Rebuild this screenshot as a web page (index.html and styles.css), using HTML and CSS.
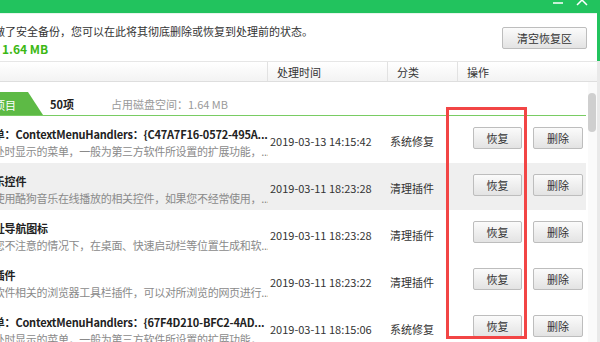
FILE: index.html
```html
<!DOCTYPE html>
<html lang="zh-CN">
<head>
    <meta charset="UTF-8">
    <title>恢复区</title>
    <link rel="stylesheet" href="styles.css">
</head>
<body>
    <div class="window">
        <div class="main">
            <div class="titlebar">
                <svg class="win-ctrl" width="40" height="13" viewBox="0 0 40 13">
                    <line x1="3" y1="3" x2="13" y2="3" stroke="#fff" stroke-width="1.5"/>
                    <line x1="27" y1="-5" x2="37" y2="5" stroke="#fff" stroke-width="1.5"/>
                    <line x1="37" y1="-5" x2="27" y2="5" stroke="#fff" stroke-width="1.5"/>
                </svg>
            </div>

            <div class="info">
                <div class="info-text">
                    <p class="notice clip">已做了安全备份，您可以在此将其彻底删除或恢复到处理前的状态。</p>
                    <p class="size">1.64 MB</p>
                </div>
                <button class="btn btn-clear">清空恢复区</button>
            </div>

            <div class="thead">
                <div class="th th-name"></div>
                <div class="th th-time">处理时间</div>
                <div class="th th-cat">分类</div>
                <div class="th th-op">操作</div>
            </div>

            <div class="content">
                <div class="list">
                    <div class="tabs">
                        <div class="tab-active"><span class="tab-label">全部项目</span></div>
                        <span class="count">50项</span>
                        <span class="disk">占用磁盘空间：1.64 MB</span>
                    </div>

                    <div class="row">
                        <div class="name">
                            <p class="title clip">菜单：ContextMenuHandlers：{C47A7F16-0572-495A...</p>
                            <p class="desc clip">某处时显示的菜单，一般为第三方软件所设置的扩展功能，...</p>
                        </div>
                        <div class="time">2019-03-13 14:15:42</div>
                        <div class="cat">系统修复</div>
                        <div class="ops">
                            <button class="btn btn-restore">恢复</button>
                            <button class="btn btn-delete">删除</button>
                        </div>
                    </div>

                    <div class="row row-hover">
                        <div class="name">
                            <p class="title clip">音乐控件</p>
                            <p class="desc clip">供使用酷狗音乐在线播放的相关控件，如果您不经常使用，...</p>
                        </div>
                        <div class="time">2019-03-11 18:23:28</div>
                        <div class="cat">清理插件</div>
                        <div class="ops">
                            <button class="btn btn-restore">恢复</button>
                            <button class="btn btn-delete">删除</button>
                        </div>
                    </div>

                    <div class="row">
                        <div class="name">
                            <p class="title clip">网址导航图标</p>
                            <p class="desc clip">在您不注意的情况下，在桌面、快速启动栏等位置生成和软...</p>
                        </div>
                        <div class="time">2019-03-11 18:23:28</div>
                        <div class="cat">清理插件</div>
                        <div class="ops">
                            <button class="btn btn-restore">恢复</button>
                            <button class="btn btn-delete">删除</button>
                        </div>
                    </div>

                    <div class="row">
                        <div class="name">
                            <p class="title clip">栏插件</p>
                            <p class="desc clip">与软件相关的浏览器工具栏插件，可以对所浏览的网页进行...</p>
                        </div>
                        <div class="time">2019-03-11 18:23:22</div>
                        <div class="cat">清理插件</div>
                        <div class="ops">
                            <button class="btn btn-restore">恢复</button>
                            <button class="btn btn-delete">删除</button>
                        </div>
                    </div>

                    <div class="row">
                        <div class="name">
                            <p class="title clip">菜单：ContextMenuHandlers：{67F4D210-BFC2-4AD...</p>
                            <p class="desc clip">某处时显示的菜单，一般为第三方软件所设置的扩展功能，...</p>
                        </div>
                        <div class="time">2019-03-11 18:15:06</div>
                        <div class="cat">系统修复</div>
                        <div class="ops">
                            <button class="btn btn-restore">恢复</button>
                            <button class="btn btn-delete">删除</button>
                        </div>
                    </div>
                </div>

                <div class="scrollbar">
                    <div class="thumb"></div>
                </div>
            </div>
        </div>
        <div class="edge"></div>

        <!-- annotation box drawn over the restore column -->
        <div class="mark"></div>
    </div>
</body>
</html>
```

FILE: styles.css
```css
body {
    margin: 0;
    padding: 0;
    overflow: hidden;
    background-color: #ffffff;
    color: #333333;
    font-family: "Noto Sans CJK SC", "Microsoft YaHei", sans-serif;
    font-size: 11px;
}

p {
    margin: 0;
}

.window {
    position: relative;
    display: flex;
    width: 600px;
    height: 342px;
    overflow: hidden;
}

.main {
    width: 597px;
    display: flex;
    flex-direction: column;
}

.edge {
    width: 3px;
    background: linear-gradient(#22c35e 0, #22c35e 61px, #e9e9e9 61px);
}

/* title bar */
.titlebar {
    flex-shrink: 0;
    height: 13px;
    background-color: #22c35e;
    display: flex;
    justify-content: flex-end;
    padding-right: 7px;
}

.win-ctrl {
    display: block;
}

/* info area */
.info {
    flex-shrink: 0;
    display: flex;
    justify-content: space-between;
    height: 48px;
    box-sizing: border-box;
    padding: 9px 10px 0 0;
    border-top: 1px solid #e6f5ec;
}

.info-text {
    overflow: hidden;
}

.notice {
    line-height: 17px;
    white-space: nowrap;
    color: #333333;
}

.size {
    line-height: 17px;
    margin-left: 2px;
    color: #3cb814;
    font-weight: bold;
    font-size: 12px;
}

.btn {
    font-family: inherit;
    font-size: 11px;
    color: #333333;
    background: linear-gradient(#fbfbfb, #e3e3e3);
    border: 1px solid #bdbdbd;
    border-radius: 2px;
    padding: 0;
    height: 22px;
    line-height: 20px;
}

.btn-clear {
    width: 85px;
    margin-top: 4px;
}

/* table header */
.thead {
    flex-shrink: 0;
    display: flex;
    height: 21px;
    box-sizing: border-box;
    border-top: 1px solid #e6e6e6;
    border-bottom: 1px solid #dedede;
    background: linear-gradient(#ffffff, #f3f3f3);
}

.th {
    line-height: 16px;
    padding: 2px 0 0 9px;
    box-sizing: border-box;
    border-right: 1px solid #e2e2e2;
}

.th-name { width: 268px; }
.th-time { width: 120px; }
.th-cat { width: 70px; }
.th-op { flex: 1; border-right: none; }

/* list */
.content {
    flex: 1;
    min-height: 0;
    overflow: hidden;
    display: flex;
}

.list {
    width: 586px;
    padding-top: 8px;
}

.scrollbar {
    width: 9px;
    margin-left: 2px;
    background-color: #fafafa;
}

.thumb {
    margin-top: 11px;
    width: 8px;
    height: 39px;
    border-radius: 4px;
    background-color: #cfcfcf;
}

.tabs {
    display: flex;
    align-items: flex-end;
    height: 25px;
    border-bottom: 1px solid #79cc63;
}

.tab-active {
    width: 43px;
    height: 23px;
    line-height: 26px;
    background-color: #5dba45;
    color: #ffffff;
    overflow: hidden;
    white-space: nowrap;
    clip-path: polygon(0 0, 28px 0, 43px 100%, 0 100%);
}

.tab-label {
    margin-left: -28px;
}

.count {
    margin: 0 0 2px 7px;
    line-height: 17px;
    font-weight: bold;
    color: #222222;
}

.disk {
    margin: 0 0 2px 37px;
    line-height: 17px;
    color: #9a9a9a;
}

.row {
    display: flex;
    align-items: center;
    height: 47px;
}

.row-hover {
    background-color: #efefef;
}

.name {
    align-self: flex-start;
    width: 268px;
    overflow: hidden;
    padding-top: 10px;
}

.title,
.desc {
    line-height: 17px;
    white-space: nowrap;
}

.title {
    font-weight: bold;
    color: #222222;
    letter-spacing: -0.2px;
}

.desc {
    color: #8a8a8a;
    letter-spacing: -0.3px;
}

/* first character runs off the left edge */
.clip {
    margin-left: -17px;
}

.time,
.cat {
    padding: 3px 0 0 2px;
    box-sizing: border-box;
}

.time { width: 120px; }
.cat { width: 70px; }

.ops {
    display: flex;
    gap: 11px;
    padding-left: 15px;
    margin-bottom: 3px;
}

.btn-restore { width: 49px; }
.btn-delete { width: 50px; }

.mark {
    position: absolute;
    left: 446px;
    top: 107px;
    width: 81px;
    height: 232px;
    box-sizing: border-box;
    border: 3px solid #f24545;
}
```
